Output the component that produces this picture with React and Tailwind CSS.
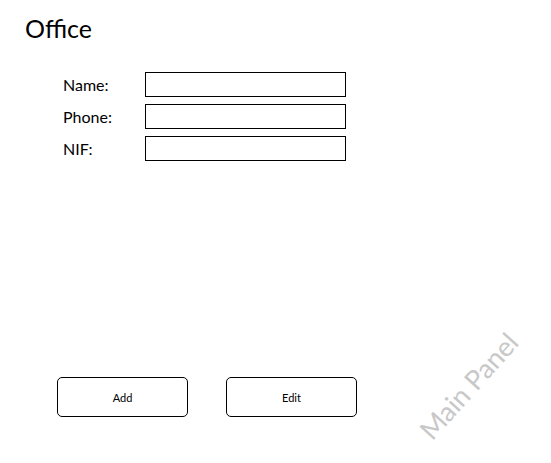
const fields = ["Name:", "Phone:", "NIF:"];

const App = () => {
    return (
        <div className="relative w-[551px] h-[463px] overflow-hidden bg-white text-black font-['Lato','Liberation_Sans',sans-serif]">
            <h1 className="pl-[25px] pt-[12px] text-[25px] leading-[32px]">Office</h1>

            <div className="mt-[28px] ml-[63px] flex flex-col gap-[7px]">
                {fields.map((f) => (
                    <div key={f} className="flex items-center">
                        <span className="w-[82px] text-[16px]">{f}</span>
                        <div className="w-[201px] h-[25px] border border-black" />
                    </div>
                ))}
            </div>

            <div className="mt-[216px] ml-[57px] flex gap-[38px]">
                <button className="w-[131px] h-[40px] pt-[2px] border border-black rounded-[5px] text-[11px]">Add</button>
                <button className="w-[131px] h-[40px] pt-[2px] border border-black rounded-[5px] text-[11px]">Edit</button>
            </div>

            {/* watermark */}
            <div className="absolute left-[403px] top-[366px] -rotate-[48deg] text-[27px] leading-[40px] text-[#c8c8c8] whitespace-nowrap">
                Main Panel
            </div>
        </div>
    );
};

export default App;
